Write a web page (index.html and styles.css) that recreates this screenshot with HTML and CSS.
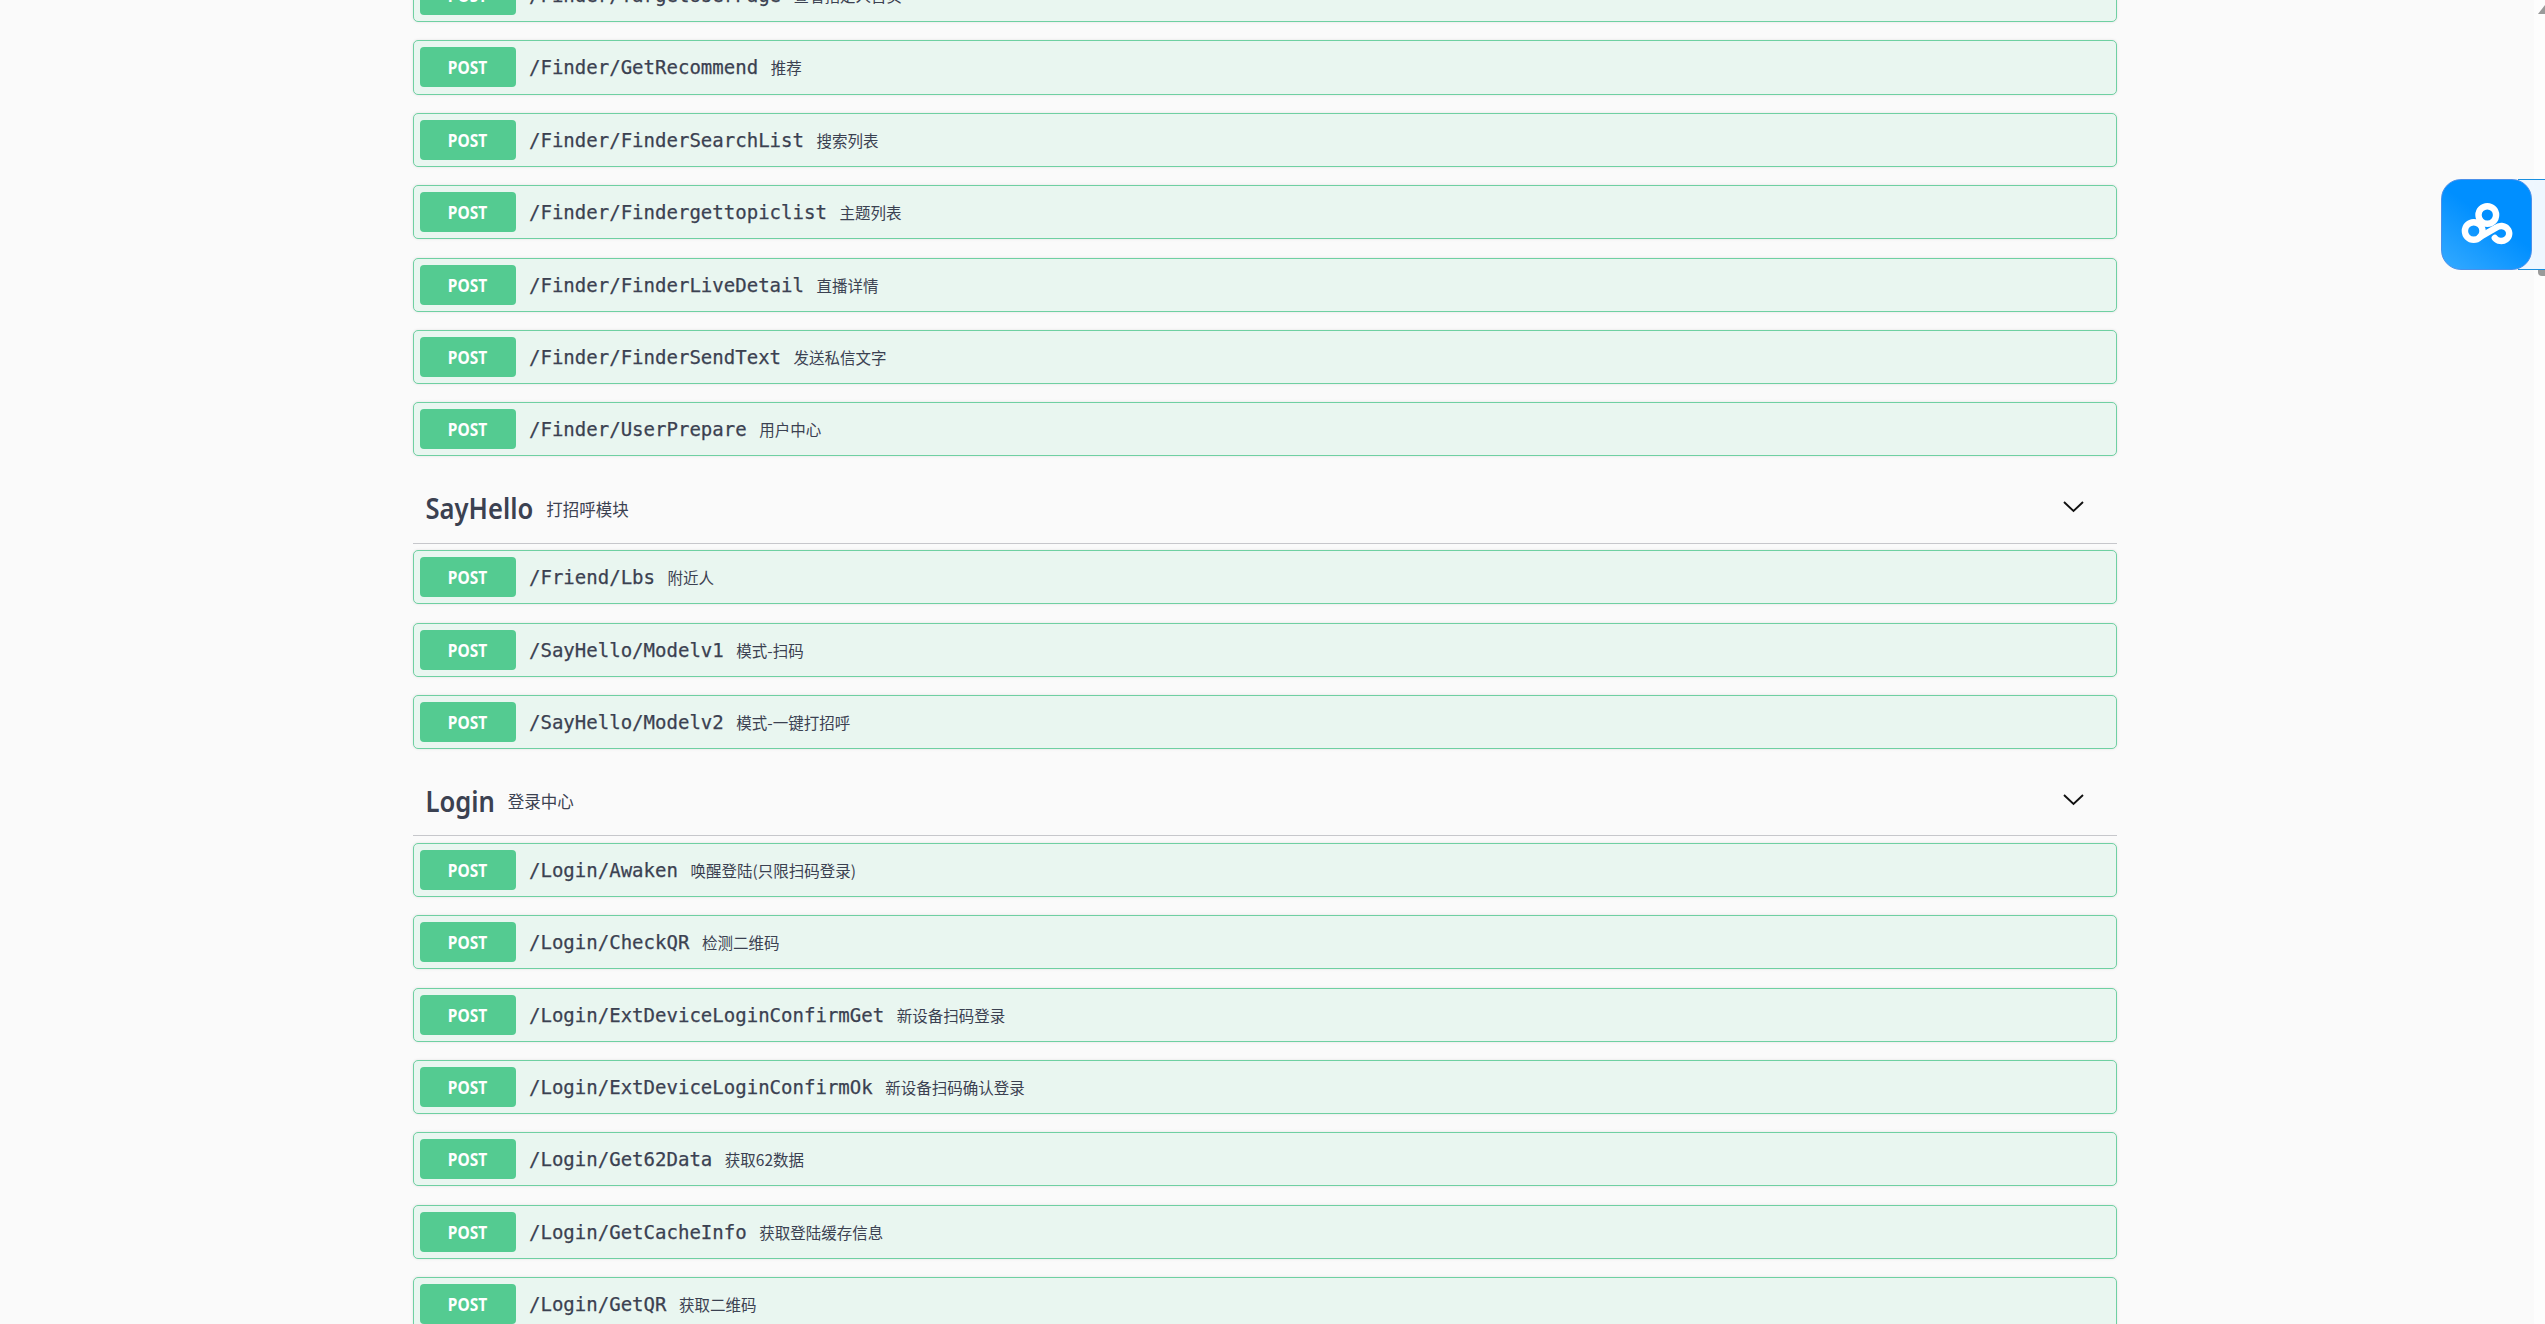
FILE: index.html
```html
<!DOCTYPE html>
<html lang="zh">
<head>
<meta charset="utf-8">
<title>API</title>
<link rel="stylesheet" href="styles.css">
</head>
<body>
<main class="page">
  <section class="group">
    <a class="op"><span class="method"><span class="method-label">POST</span></span><span class="path">/Finder/TargetUserPage</span><span class="desc">查看指定人首页</span></a>
    <a class="op"><span class="method"><span class="method-label">POST</span></span><span class="path">/Finder/GetRecommend</span><span class="desc">推荐</span></a>
    <a class="op"><span class="method"><span class="method-label">POST</span></span><span class="path">/Finder/FinderSearchList</span><span class="desc">搜索列表</span></a>
    <a class="op"><span class="method"><span class="method-label">POST</span></span><span class="path">/Finder/Findergettopiclist</span><span class="desc">主题列表</span></a>
    <a class="op"><span class="method"><span class="method-label">POST</span></span><span class="path">/Finder/FinderLiveDetail</span><span class="desc">直播详情</span></a>
    <a class="op"><span class="method"><span class="method-label">POST</span></span><span class="path">/Finder/FinderSendText</span><span class="desc">发送私信文字</span></a>
    <a class="op"><span class="method"><span class="method-label">POST</span></span><span class="path">/Finder/UserPrepare</span><span class="desc">用户中心</span></a>
  </section>
  <section class="group">
    <h3 class="tag"><span class="tag-name">SayHello</span><span class="tag-desc">打招呼模块</span>
      <svg class="chev" viewBox="0 0 21 12"><path d="M1 1 L10.5 10 L20 1"/></svg></h3>
    <a class="op"><span class="method"><span class="method-label">POST</span></span><span class="path">/Friend/Lbs</span><span class="desc">附近人</span></a>
    <a class="op"><span class="method"><span class="method-label">POST</span></span><span class="path">/SayHello/Modelv1</span><span class="desc">模式-扫码</span></a>
    <a class="op"><span class="method"><span class="method-label">POST</span></span><span class="path">/SayHello/Modelv2</span><span class="desc">模式-一键打招呼</span></a>
  </section>
  <section class="group">
    <h3 class="tag"><span class="tag-name">Login</span><span class="tag-desc">登录中心</span>
      <svg class="chev" viewBox="0 0 21 12"><path d="M1 1 L10.5 10 L20 1"/></svg></h3>
    <a class="op"><span class="method"><span class="method-label">POST</span></span><span class="path">/Login/Awaken</span><span class="desc">唤醒登陆(只限扫码登录)</span></a>
    <a class="op"><span class="method"><span class="method-label">POST</span></span><span class="path">/Login/CheckQR</span><span class="desc">检测二维码</span></a>
    <a class="op"><span class="method"><span class="method-label">POST</span></span><span class="path">/Login/ExtDeviceLoginConfirmGet</span><span class="desc">新设备扫码登录</span></a>
    <a class="op"><span class="method"><span class="method-label">POST</span></span><span class="path">/Login/ExtDeviceLoginConfirmOk</span><span class="desc">新设备扫码确认登录</span></a>
    <a class="op"><span class="method"><span class="method-label">POST</span></span><span class="path">/Login/Get62Data</span><span class="desc">获取62数据</span></a>
    <a class="op"><span class="method"><span class="method-label">POST</span></span><span class="path">/Login/GetCacheInfo</span><span class="desc">获取登陆缓存信息</span></a>
    <a class="op"><span class="method"><span class="method-label">POST</span></span><span class="path">/Login/GetQR</span><span class="desc">获取二维码</span></a>
  </section>
</main>
<div class="scrollbar"><span class="arrow"></span><span class="thumb"></span></div>
<aside class="widget">
  <div class="tile">
    <svg class="logo" viewBox="12 10 89 89"><g fill="none" stroke="#fff" stroke-width="6.4" stroke-linecap="round" stroke-linejoin="round">
      <circle cx="57.3" cy="45" r="8.8"/>
      <circle cx="43.7" cy="61" r="8.8"/>
      <path d="M64.8 68 A8 7.5 0 1 0 66 57.8 L50 67"/>
    </g></svg>
  </div>
  <div class="tail"></div>
</aside>
</body>
</html>
```
FILE: styles.css
```css
html, body {
  margin: 0;
  height: 100%;
  overflow: hidden;
  background: #fafafa;
}
.page {
  padding: 0 0 0 412.5px;
  margin-top: -32px;
  font-family: "Noto Sans", "Noto Sans CJK SC", sans-serif;
  color: #3b4151;
}
.group {
  width: 1704.5px;
}
.op {
  box-sizing: border-box;
  height: 54.2px;
  margin-bottom: 18.2px;
  display: flex;
  align-items: center;
  padding: 0 6px;
  background: #e9f6f0;
  border: 1.6px solid #6fd0a2;
  border-radius: 5px;
  box-shadow: 0 0 3px rgba(0, 0, 0, .1);
}
.method {
  width: 96px;
  height: 40px;
  flex: none;
  display: flex;
  align-items: center;
  justify-content: center;
  background: #54cb91;
  border-radius: 4px;
}
.method-label {
  display: inline-block;
  transform: scaleY(1.12);
  color: #fff;
  font: 700 15.5px "Noto Sans", sans-serif;
}
.path {
  margin-left: 13.5px;
  font: 400 19.05px "DejaVu Sans Mono", monospace;
  -webkit-text-stroke: .25px #3b4151;
  color: #3b4151;
}
.desc {
  margin-left: 12.5px;
  font: 400 15.5px "Noto Sans CJK SC", "Noto Sans", sans-serif;
  color: #3b4151;
}
.tag {
  box-sizing: border-box;
  height: 69px;
  margin: 0 0 6.5px;
  padding: 0 0 0 13px;
  display: flex;
  align-items: center;
  border-bottom: 1.4px solid #c6c7cb;
}
.tag-name {
  display: inline-block;
  transform: scaleY(1.14);
  font: 600 25.6px "Noto Sans", sans-serif;
  color: #3b4151;
}
.tag-desc {
  margin-left: 13px;
  font: 400 16.5px "Noto Sans CJK SC", "Noto Sans", sans-serif;
  color: #3b4151;
}
.chev {
  width: 21px;
  height: 12px;
  margin-left: auto;
  margin-right: 33px;
  margin-bottom: 3px;
  fill: none;
  stroke: #111;
  stroke-width: 1.9;
}
.scrollbar {
  position: fixed;
  top: 0;
  right: 0;
  bottom: 0;
  width: 11px;
  background: #fdfdfd;
}
.arrow {
  position: absolute;
  top: 5px;
  right: 0;
  width: 0;
  height: 0;
  border-left: 7px solid transparent;
  border-bottom: 9px solid #9a9a9a;
}
.thumb {
  position: absolute;
  top: 262px;
  right: 0;
  width: 7px;
  height: 14px;
  background: #9a9a9a;
  border-radius: 0 0 0 4px;
}
.widget {
  position: fixed;
  top: 179px;
  right: 0;
  width: 104px;
  height: 91px;
  display: flex;
}
.tile {
  width: 91px;
  height: 91px;
  flex: none;
  box-sizing: border-box;
  display: flex;
  align-items: center;
  justify-content: center;
  border-radius: 20px;
  border: 1px solid #4a90ea;
  background: linear-gradient(215deg, #008fff 45%, #35aaff 100%);
  position: relative;
  z-index: 1;
}
.logo {
  width: 89px;
  height: 89px;
}
.tail {
  flex: 1;
  margin-left: -14px;
  background: #eef7ff;
  border-top: 1px solid #1a8fe0;
  border-bottom: 1px solid #1a8fe0;
}
```
